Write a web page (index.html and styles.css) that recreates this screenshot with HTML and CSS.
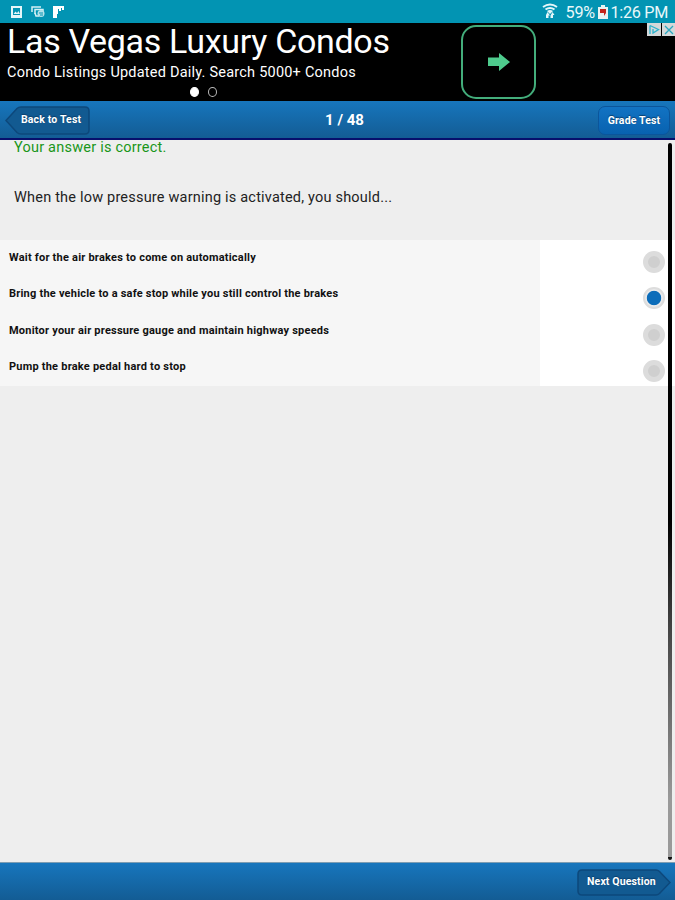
FILE: index.html
```html
<!DOCTYPE html>
<html lang="en">
<head>
    <meta charset="UTF-8">
    <title>Practice Test</title>
    <link rel="stylesheet" href="styles.css">
</head>
<body>
    <div class="status">
        <svg class="tray" width="56" height="14" viewBox="0 0 56 14">
            <path fill="#e4f6f9" fill-rule="evenodd" d="M1 1h11v12H1zM3 3v7h7V3zM3.500 9l2-2.500 1.500 1.500 1.500-2L10 9z"/>
            <path fill="none" stroke="#d5f0f5" stroke-width="1.500" d="M22 7V2h9M25 9V4.500h8V7"/>
            <path fill="none" stroke="#d5f0f5" stroke-width="1.500" d="M25 8l1 3h3"/>
            <circle cx="31" cy="8.500" r="3.500" fill="#b5e3eb"/>
            <path stroke="#0294b3" d="M29 8h4M30 10h3"/>
            <path fill="#fff" d="M43 1h11v4h-2V3h-1v3h-2V4h-1v5h-1v4h-4z"/>
        </svg>
        <div class="status-right">
            <svg class="wifi" width="16" height="16" viewBox="0 0 16 16">
                <path fill="none" stroke="#e4f6f9" stroke-width="2" d="M1 4q7-5 14 0M3.500 6.500q4.500-3 9 0"/>
                <path fill="#e4f6f9" d="M5 8q3-2 6 0l-3 3z"/>
                <path fill="#e4f6f9" d="M5.500 9L8 12.500H6.500V15H4v-3zM10.500 9l2 3H11v3H8.500v-2.500z"/>
            </svg>
            <span class="percent">59%</span>
            <svg class="battery" width="10" height="14" viewBox="0 0 10 14">
                <path fill="#e9f3f2" d="M3 0h4v2h3v12H0V2h3z"/>
                <path fill="#c3261c" d="M2 4h6v4L6 11V8H2z"/>
            </svg>
            <span class="clock">1:26 PM</span>
        </div>
    </div>

    <div class="ad">
        <div class="ad-text">
            <div class="ad-title">Las Vegas Luxury Condos</div>
            <div class="ad-sub">Condo Listings Updated Daily. Search 5000+ Condos</div>
            <div class="dots">
                <span class="dot on"></span>
                <span class="dot"></span>
            </div>
        </div>
        <div class="ad-go">
            <svg width="24" height="20" viewBox="0 0 24 20">
                <path fill="#4ecb8d" d="M1 5.500h11V1l11 9-11 9v-5H1z"/>
            </svg>
        </div>
        <svg class="ad-choices" width="28" height="13" viewBox="0 0 28 13">
            <path fill="#d4d8d9" d="M0 0h14v13H0zM15 0h13v13H15z"/>
            <path fill="none" stroke="#29b2cd" stroke-width="1.300" d="M3 2.500v8.500M3 2.500l8.500 4L6 10V6"/>
            <path stroke="#29a7c0" stroke-width="1.300" d="M18 3l8 8M26 3l-8 8"/>
        </svg>
    </div>

    <div class="header">
        <div class="btn back">
            <svg class="btn-bg" width="85" height="29" viewBox="0 0 85 29">
                <path d="M1 14.500L12 2.500Q13.500 1 16 1H80Q84 1 84 5V24Q84 28 80 28H16Q13.500 28 12 26.500Z"/>
            </svg>
            <span>Back to Test</span>
        </div>
        <div class="count">1 / 48</div>
        <div class="btn grade"><span>Grade Test</span></div>
    </div>

    <div class="content">
        <div class="result">Your answer is correct.</div>
        <div class="question">When the low pressure warning is activated, you should...</div>
        <div class="answers">
            <div class="row">
                <div class="label">Wait for the air brakes to come on automatically</div>
                <div class="pick"><span class="radio"></span></div>
            </div>
            <div class="row">
                <div class="label">Bring the vehicle to a safe stop while you still control the brakes</div>
                <div class="pick"><span class="radio checked"></span></div>
            </div>
            <div class="row">
                <div class="label">Monitor your air pressure gauge and maintain highway speeds</div>
                <div class="pick"><span class="radio"></span></div>
            </div>
            <div class="row">
                <div class="label">Pump the brake pedal hard to stop</div>
                <div class="pick"><span class="radio"></span></div>
            </div>
        </div>
        <div class="scrollbar"></div>
    </div>

    <div class="footer">
        <div class="btn next">
            <svg class="btn-bg" width="94" height="27" viewBox="0 0 94 27">
                <path d="M5 1H79Q81 1 82.500 2.500L93 13.500L82.500 24.500Q81 26 79 26H5Q1 26 1 22V5Q1 1 5 1Z"/>
            </svg>
            <span>Next Question</span>
        </div>
    </div>
</body>
</html>
```

FILE: styles.css
```css
* {
    box-sizing: border-box;
}
body {
    margin: 0;
    width: 675px;
    height: 900px;
    display: flex;
    flex-direction: column;
    overflow: hidden;
    background: #eee;
    font-family: Roboto, "Liberation Sans", sans-serif;
    white-space: nowrap;
}
.status {
    height: 23px;
    display: flex;
    justify-content: space-between;
    padding: 0 7px 0 10px;
    background: #0294b3;
    color: #e9f8fa;
}
.tray {
    margin-top: 5px;
}
.status-right {
    display: flex;
    font-size: 16.2px;
    line-height: 25px;
}
.wifi {
    margin: 3px 8px 0 0;
}
.percent {
    width: 30px;
    letter-spacing: -0.2px;
}
.battery {
    margin: 5px 3px 0 2px;
}
.clock {
    letter-spacing: -0.3px;
}
.ad {
    position: relative;
    height: 78px;
    display: flex;
    background: #000;
    color: #fff;
}
.ad-text {
    width: 461px;
    padding-left: 7px;
}
.ad-title {
    height: 38px;
    font-size: 34px;
    line-height: 36px;
    letter-spacing: -0.32px;
}
.ad-sub {
    height: 23px;
    font-size: 14.5px;
    line-height: 23px;
    letter-spacing: 0.22px;
}
.dots {
    display: flex;
    gap: 9px;
    padding: 3px 0 0 183px;
}
.dot {
    width: 9px;
    height: 10px;
    border: 1.5px solid #bbb;
    border-radius: 50%;
}
.on {
    background: #fff;
    border-color: #fff;
}
.ad-go {
    width: 75px;
    height: 74px;
    margin-top: 2px;
    display: flex;
    align-items: center;
    justify-content: center;
    border: 2px solid #43ad7b;
    border-radius: 15px;
}
.ad-choices {
    position: absolute;
    top: 0;
    right: 0;
}
.header {
    height: 39px;
    display: flex;
    justify-content: space-between;
    padding: 5px 5px 0;
    background: linear-gradient(#1776bd, #135c94);
    border-bottom: 2px solid #070f6c;
}
.btn {
    position: relative;
    height: 29px;
    color: #fff;
    font-size: 10.5px;
    font-weight: 700;
    line-height: 28px;
    letter-spacing: 0.15px;
    text-shadow: 0 -1px 1px #0a3f6c;
}
.btn span {
    position: relative;
}
.btn-bg {
    position: absolute;
    top: 0;
    left: 0;
    fill: #125a91;
    stroke: #0d487b;
    stroke-width: 1.5;
}
.back {
    width: 85px;
    padding-left: 16px;
}
.grade {
    width: 72px;
    border: 1px solid #0b559b;
    border-radius: 7px;
    background: linear-gradient(#1273c3, #0862b0);
    line-height: 27px;
    text-align: center;
}
.count {
    color: #fff;
    font-size: 15px;
    font-weight: 700;
    line-height: 28px;
    margin-left: 1px;
}
.content {
    position: relative;
    height: 723px;
    overflow: hidden;
}
.result {
    height: 37px;
    padding-left: 14px;
    color: #1a961a;
    font-size: 14.5px;
    line-height: 17px;
    letter-spacing: 0.22px;
    margin-top: -1px;
}
.question {
    height: 64px;
    padding-left: 14px;
    color: #222;
    font-size: 14.5px;
    line-height: 44px;
    letter-spacing: 0.2px;
}
.answers {
    height: 146px;
    display: grid;
    grid-template-rows: repeat(4, 1fr);
    background: #fff;
}
.row {
    display: flex;
}
.label {
    width: 540px;
    padding-left: 9px;
    background: #f6f6f6;
    color: #111;
    font-size: 11px;
    font-weight: 700;
    line-height: 36px;
    letter-spacing: 0.22px;
}
.pick {
    padding: 11px 0 0 103px;
}
.radio {
    display: block;
    width: 22px;
    height: 22px;
    border: 5px solid #dcdcdc;
    border-radius: 50%;
    background: #cfcfcf;
}
.checked {
    border: 2px solid #ddd;
    background: radial-gradient(circle, #0c6dba 6.8px, #e9eaeb 7.6px);
}
.scrollbar {
    position: absolute;
    top: 3px;
    left: 668px;
    width: 4px;
    height: 717px;
    border-bottom: 3px solid #111;
    border-radius: 2px;
    background: linear-gradient(#000 53%, #444 68%, #999 92%);
}
.footer {
    height: 38px;
    display: flex;
    justify-content: flex-end;
    padding: 6px 4px 0;
    border-top: 1px solid #7d9db3;
    background: linear-gradient(#1776bd, #135c94);
}
.next {
    width: 94px;
    padding-left: 10px;
    line-height: 26px;
}
```
